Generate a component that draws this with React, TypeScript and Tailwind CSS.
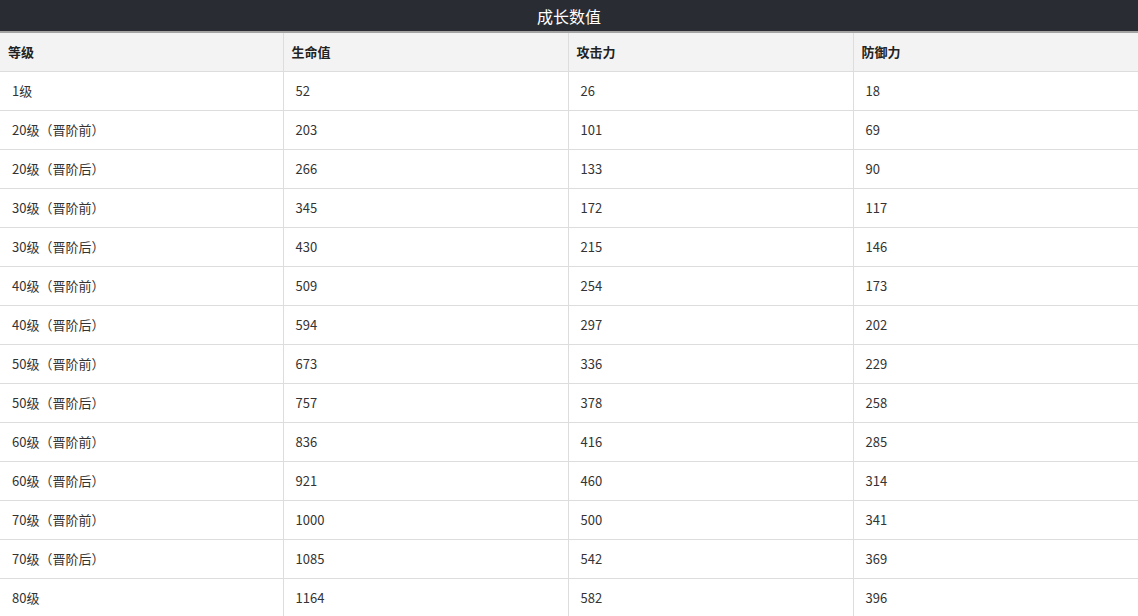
import React from "react";

const rows: [string, string, string, string][] = [
  ["1级", "52", "26", "18"],
  ["20级（晋阶前）", "203", "101", "69"],
  ["20级（晋阶后）", "266", "133", "90"],
  ["30级（晋阶前）", "345", "172", "117"],
  ["30级（晋阶后）", "430", "215", "146"],
  ["40级（晋阶前）", "509", "254", "173"],
  ["40级（晋阶后）", "594", "297", "202"],
  ["50级（晋阶前）", "673", "336", "229"],
  ["50级（晋阶后）", "757", "378", "258"],
  ["60级（晋阶前）", "836", "416", "285"],
  ["60级（晋阶后）", "921", "460", "314"],
  ["70级（晋阶前）", "1000", "500", "341"],
  ["70级（晋阶后）", "1085", "542", "369"],
  ["80级", "1164", "582", "396"],
];

const headers = ["等级", "生命值", "攻击力", "防御力"];

export default function App() {
  return (
    <div
      className="w-[1138px] bg-white"
      style={{ fontFamily: '"Microsoft YaHei", "Noto Sans CJK SC", "Noto Sans", sans-serif' }}
    >
      <div className="h-[31px] bg-[#292c33] border-b-2 border-[#a3a3a3] flex items-center justify-center text-white text-[16px] leading-none box-content">
        成长数值
      </div>
      <table className="w-[1138px] table-fixed border-collapse">
        <colgroup>
          <col className="w-[283px]" />
          <col className="w-[285px]" />
          <col className="w-[285px]" />
          <col className="w-[285px]" />
        </colgroup>
        <thead>
          <tr className="h-[38px] bg-[#f3f3f3]">
            {headers.map((h) => (
              <th
                key={h}
                className="text-left font-bold text-[13px] text-[#222] pl-2 border-b border-r border-[#dddddd]"
              >
                {h}
              </th>
            ))}
          </tr>
        </thead>
        <tbody>
          {rows.map((r) => (
            <tr key={r[0]} className="h-[39px]">
              {r.map((c, i) => (
                <td
                  key={i}
                  className="text-left text-[13px] text-[#333] pl-3 border-b border-r border-[#dddddd]"
                >
                  {c}
                </td>
              ))}
            </tr>
          ))}
        </tbody>
      </table>
    </div>
  );
}
